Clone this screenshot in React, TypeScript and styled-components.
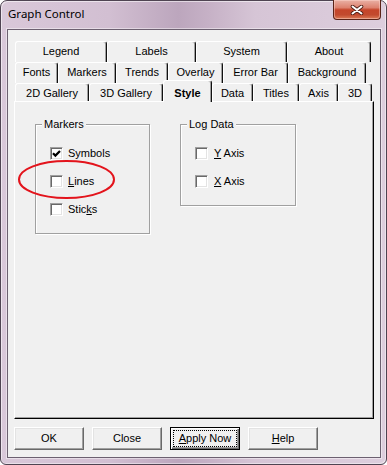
import React from 'react';
import styled, { createGlobalStyle } from 'styled-components';

const UI = `"Liberation Sans", Arial, sans-serif`;

const GlobalStyle = createGlobalStyle`
  html, body { margin: 0; padding: 0; background: #ffffff; }
  body { width: 387px; height: 465px; overflow: hidden; font-family: ${UI}; }
  * { box-sizing: border-box; }
`;

const Window = styled.div`
  position: relative;
  width: 387px;
  height: 465px;
  display: flex;
  flex-direction: column;
  padding: 0 5px 6px 6px;
  border: 1px solid #4f4452;
  border-radius: 7px 7px 6px 6px;
  background: linear-gradient(90deg, #d9c8d9 0%, #d2bfd2 28%, #bca6bd 46%, #c6b1c6 54%, #d6c5d6 66%, #ddcedd 100%);
  box-shadow: inset 1px 1px 0 rgba(255, 255, 255, 0.55), inset -1px -1px 0 rgba(255, 255, 255, 0.45);
`;

const TitleBar = styled.div`
  height: 28px;
  flex: none;
  display: flex;
  justify-content: space-between;
  align-items: flex-start;
`;

const TitleText = styled.div`
  padding: 5px 0 0 1px;
  font-family: "Noto Sans", "Open Sans", sans-serif;
  font-size: 11.5px;
  line-height: 16px;
  color: #000;
`;

const CloseButton = styled.div`
  width: 48px;
  height: 20px;
  margin-top: -1px;
  display: flex;
  align-items: center;
  justify-content: center;
  border: 1px solid #5a2318;
  border-top: none;
  border-radius: 0 0 4px 4px;
  background: linear-gradient(180deg, #eab1a5 0%, #dd826f 40%, #c5452a 52%, #c24a2e 78%, #dc7c58 100%);
  box-shadow: inset 0 0 0 1px rgba(255, 220, 210, 0.45);
`;

const Client = styled.div`
  flex: 1;
  display: flex;
  flex-direction: column;
  padding: 11px 6px 7px 6px;
  background: #f0f0f0;
  border: 1px solid #6c6070;
  box-shadow: 0 0 0 1px rgba(255, 255, 255, 0.45);
`;

const TabRow = styled.div<{ $h: number }>`
  display: flex;
  height: ${(p) => p.$h}px;
  padding-left: 1px;
  flex: none;
`;

const Tab = styled.div<{ $w: number; $sel?: boolean }>`
  flex: none;
  width: ${(p) => p.$w}px;
  height: ${(p) => (p.$sel ? 'calc(100% + 4px)' : '100%')};
  margin-top: ${(p) => (p.$sel ? '-3px' : '0')};
  position: relative;
  z-index: ${(p) => (p.$sel ? 2 : 1)};
  padding-top: ${(p) => (p.$sel ? 6 : 3)}px;
  text-align: center;
  font-family: ${UI};
  font-size: 11px;
  line-height: 13px;
  font-weight: ${(p) => (p.$sel ? 700 : 400)};
  color: #000;
  white-space: nowrap;
  background: #f0f0f0;
  border-top: 1px solid #ffffff;
  border-left: 1px solid #ffffff;
  border-right: 1px solid #111111;
  box-shadow: inset -1px 0 0 #a0a0a0;
  border-radius: 3px 3px 0 0;
`;

const Panel = styled.div`
  flex: 1;
  display: flex;
  align-items: flex-start;
  gap: 30px;
  padding: 16px 20px;
  background: #f0f0f0;
  border-top: 1px solid #ffffff;
  border-left: 1px solid #ffffff;
  border-right: 1px solid #000000;
  border-bottom: 1px solid #000000;
  box-shadow: inset -1px -1px 0 #a0a0a0;
`;

const Group = styled.fieldset<{ $w: number }>`
  width: ${(p) => p.$w}px;
  margin: 0;
  padding: 0;
  border: 1px solid #a0a0a0;
  box-shadow: 1px 1px 0 #ffffff, inset 1px 1px 0 #ffffff;
  min-width: 0;
`;

const GroupLabel = styled.legend`
  margin-left: 6px;
  padding: 0 2px;
  font-family: ${UI};
  font-size: 11px;
  line-height: 13px;
  color: #000;
  background: #f0f0f0;
`;

const CheckList = styled.div`
  display: flex;
  flex-direction: column;
  gap: 15px;
  padding: 16px 0 17px 14px;
`;

const CheckRow = styled.div<{ $gap: number }>`
  display: flex;
  align-items: center;
  gap: ${(p) => p.$gap}px;
  height: 13px;
`;

const CheckBox = styled.div`
  width: 13px;
  height: 13px;
  flex: none;
  display: flex;
  align-items: center;
  justify-content: center;
  background: #ffffff;
  border: 1px solid;
  border-color: #a0a0a0 #ffffff #ffffff #a0a0a0;
  box-shadow: inset 1px 1px 0 #696969, inset -1px -1px 0 #e3e3e3;
`;

const CheckLabel = styled.span`
  font-family: ${UI};
  font-size: 11px;
  line-height: 13px;
  color: #000;
  white-space: nowrap;
`;

const Key = styled.span`
  text-decoration: underline;
  text-underline-offset: 1px;
`;

const ButtonRow = styled.div`
  display: flex;
  gap: 8px;
  margin-top: 8px;
  flex: none;
`;

const Button = styled.div<{ $default?: boolean }>`
  width: 70px;
  height: 23px;
  display: flex;
  align-items: center;
  justify-content: center;
  padding: ${(p) => (p.$default ? '2px' : '0')};
  font-family: ${UI};
  font-size: 11px;
  line-height: 13px;
  color: #000;
  background: #f0f0f0;
  border: 1px solid;
  border-color: ${(p) => (p.$default ? '#000 #000 #000 #000' : '#ffffff #696969 #696969 #ffffff')};
  box-shadow: ${(p) =>
    p.$default
      ? 'inset 1px 1px 0 #ffffff, inset -1px -1px 0 #696969, inset -2px -2px 0 #a0a0a0'
      : 'inset -1px -1px 0 #a0a0a0, inset 1px 1px 0 #e3e3e3'};
`;

const FocusRect = styled.span`
  flex: 1;
  align-self: stretch;
  display: flex;
  align-items: center;
  justify-content: center;
  border: 1px dotted #000;
`;

const Annotation = styled.svg`
  position: absolute;
  left: 16px;
  top: 158px;
  pointer-events: none;
  z-index: 5;
`;

type TabDef = [string, number, boolean?];

const rows: { h: number; tabs: TabDef[] }[] = [
  { h: 21, tabs: [['Legend', 92], ['Labels', 89], ['System', 91], ['About', 84]] },
  {
    h: 21,
    tabs: [['Fonts', 43], ['Markers', 58], ['Trends', 52], ['Overlay', 55], ['Error Bar', 65], ['Background', 78]],
  },
  {
    h: 18,
    tabs: [
      ['2D Gallery', 74],
      ['3D Gallery', 74],
      ['Style', 49, true],
      ['Data', 41],
      ['Titles', 46],
      ['Axis', 39],
      ['3D', 34],
    ],
  },
];

const Check = () => (
  <svg width="9" height="9" viewBox="0 0 9 9">
    <path d="M1 4.2 L3.4 6.6 L8 2" fill="none" stroke="#000" strokeWidth="2.2" />
  </svg>
);

const Item: React.FC<{ checked?: boolean; gap?: number; children: React.ReactNode }> = ({ checked, gap = 5, children }) => (
  <CheckRow $gap={gap}>
    <CheckBox>{checked && <Check />}</CheckBox>
    <CheckLabel>{children}</CheckLabel>
  </CheckRow>
);

export default function App() {
  return (
    <>
      <GlobalStyle />
      <Window>
        <TitleBar>
          <TitleText>Graph Control</TitleText>
          <CloseButton>
            <svg width="14" height="10" viewBox="0 0 14 10">
              <path d="M2.5 1.5 L11.5 8.5 M11.5 1.5 L2.5 8.5" stroke="#4b1b12" strokeWidth="3.6" strokeLinecap="round" />
              <path d="M2.5 1.5 L11.5 8.5 M11.5 1.5 L2.5 8.5" stroke="#ffffff" strokeWidth="2" strokeLinecap="round" />
            </svg>
          </CloseButton>
        </TitleBar>
        <Client>
          {rows.map((r, i) => (
            <TabRow key={i} $h={r.h}>
              {r.tabs.map(([label, w, sel]) => (
                <Tab key={label} $w={w} $sel={sel}>
                  {label}
                </Tab>
              ))}
            </TabRow>
          ))}
          <Panel>
            <Group $w={115}>
              <GroupLabel>Markers</GroupLabel>
              <CheckList>
                <Item checked>Symbols</Item>
                <Item>
                  <Key>L</Key>ines
                </Item>
                <Item>
                  Stic<Key>k</Key>s
                </Item>
              </CheckList>
            </Group>
            <Group $w={116}>
              <GroupLabel>Log Data</GroupLabel>
              <CheckList>
                <Item gap={6}>
                  <Key>Y</Key> Axis
                </Item>
                <Item gap={6}>
                  <Key>X</Key> Axis
                </Item>
              </CheckList>
            </Group>
          </Panel>
          <ButtonRow>
            <Button>OK</Button>
            <Button>Close</Button>
            <Button $default>
              <FocusRect>
                <Key>A</Key>pply Now
              </FocusRect>
            </Button>
            <Button>
              <Key>H</Key>elp
            </Button>
          </ButtonRow>
        </Client>
        <Annotation width="100" height="42" viewBox="0 0 100 42">
          <ellipse cx="49.5" cy="20.5" rx="47.5" ry="18.5" fill="none" stroke="#e3141c" strokeWidth="2" />
        </Annotation>
      </Window>
    </>
  );
}
